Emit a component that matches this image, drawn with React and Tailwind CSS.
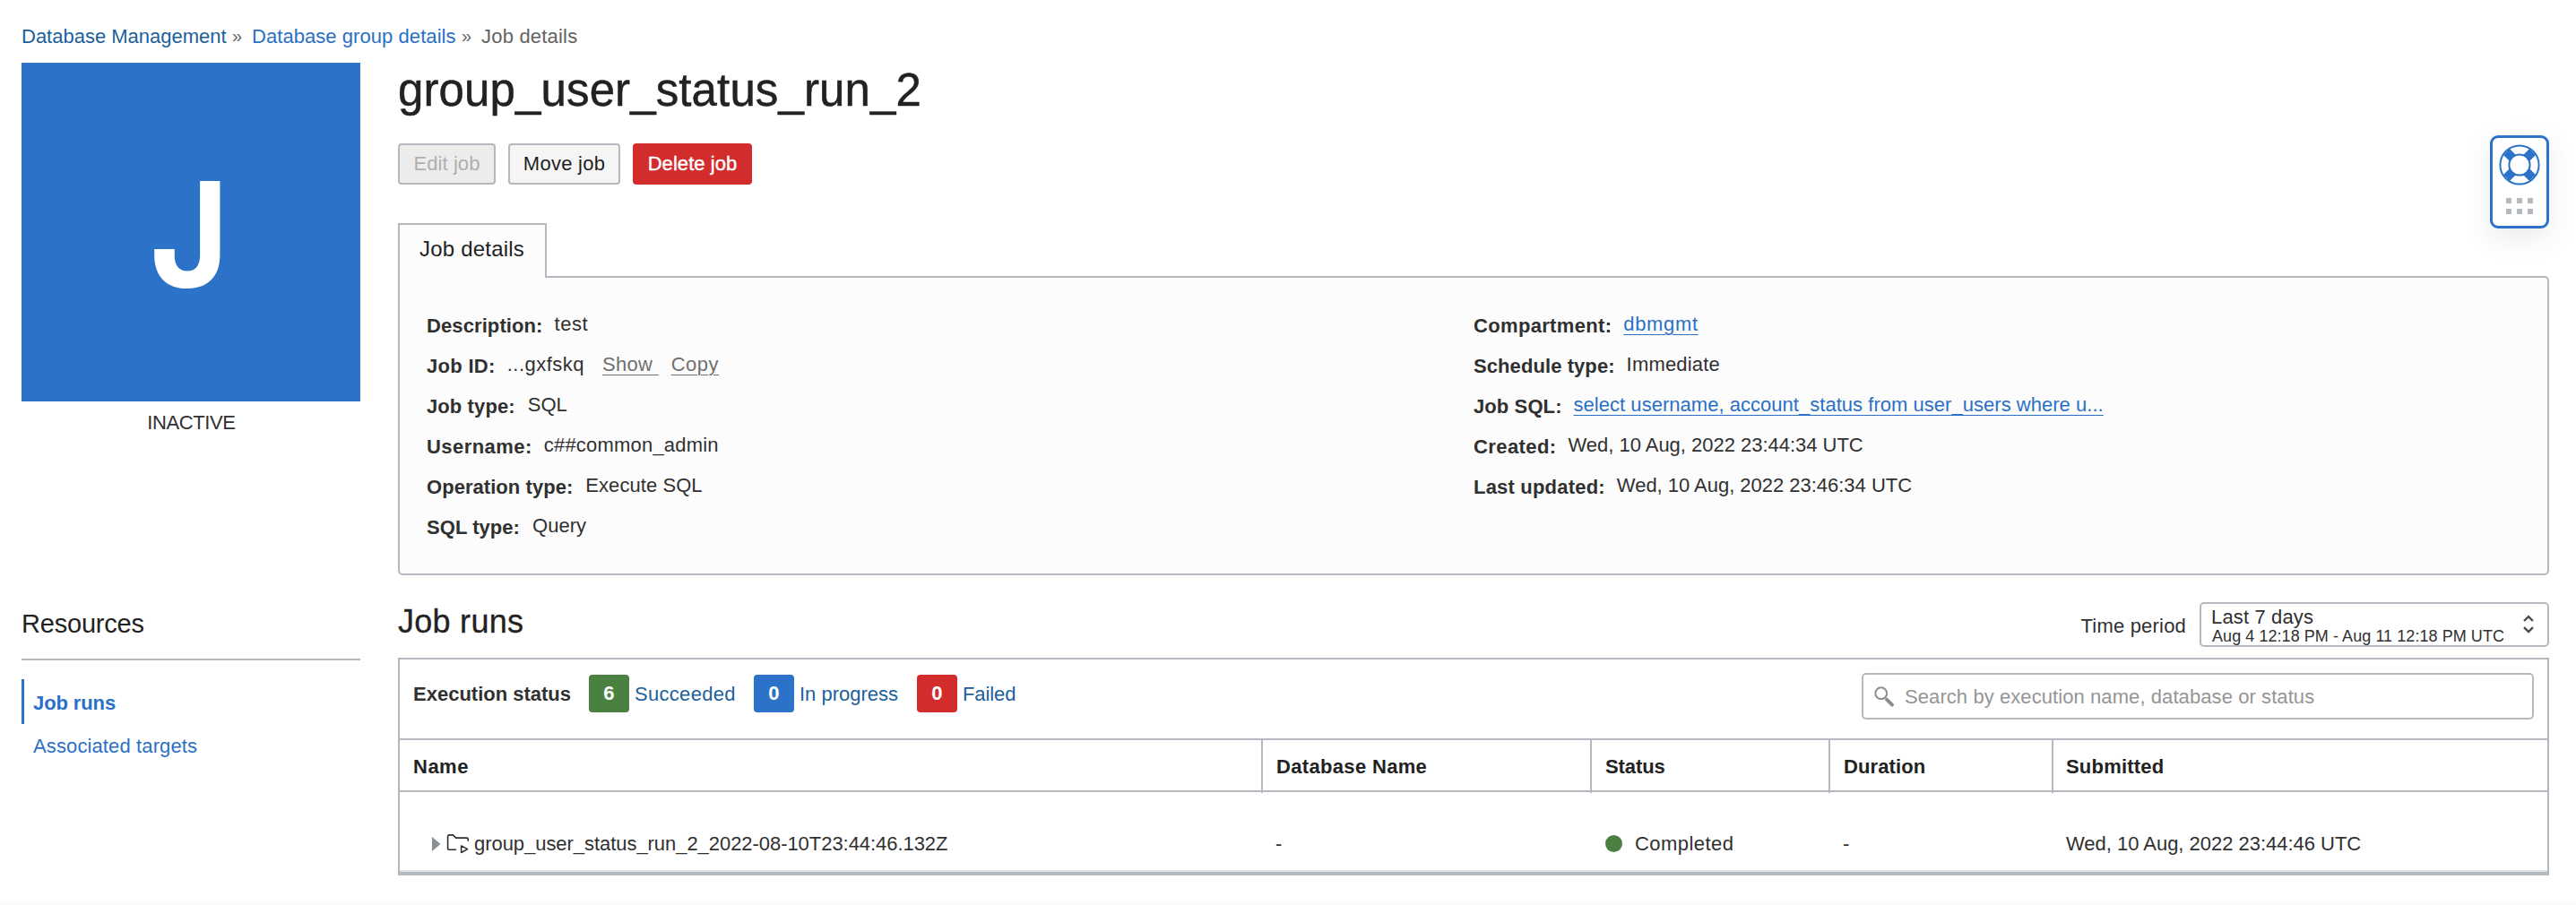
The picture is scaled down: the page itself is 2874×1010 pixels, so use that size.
import React from "react";

function Detail({ label, labelClass = "tracking-[0.1px]", gapClass = "gap-[13px]", children }) {
  return (
    <div className={`flex h-[45px] items-center ${gapClass}`}>
      <span className={`font-bold ${labelClass}`}>{label}</span>
      <span className="flex whitespace-pre pb-[4px]">{children}</span>
    </div>
  );
}

function StatusCount({ count, label, badgeClass, labelClass }) {
  return (
    <div className="flex items-center">
      <span className={`flex h-[42px] w-[45px] items-center justify-center rounded-[4px] font-bold text-white ${badgeClass}`}>
        {count}
      </span>
      <a className={`pl-[6px] pt-[1px] text-[#205f9b] ${labelClass}`}>{label}</a>
    </div>
  );
}

function LifeBuoyIcon() {
  return (
    <svg width="46" height="46" viewBox="-23 -23 46 46" className="block">
      <path d="M-14.5-14.5 14.5 14.5M14.5-14.5-14.5 14.5" stroke="#2b72c8" strokeWidth="9.8" />
      <circle r="21.6" fill="none" stroke="#2b72c8" strokeWidth="2" />
      <circle r="11.6" fill="#fff" stroke="#2b72c8" strokeWidth="2" />
    </svg>
  );
}

function RunFolderIcon() {
  return (
    <svg width="26" height="24" viewBox="0 0 26 24" fill="none" stroke="#2f2f2f" strokeWidth="1.6" strokeLinejoin="round" strokeLinecap="round">
      <path d="M10.5 18.3H2.4L1.6 17.5V3L2.6 1.9H7.3L10.6 5.1H23.2L24.2 6.1V8.2" />
      <path d="M16.6 13.9 23.6 17.7 16.6 21.5Z" strokeWidth="1.5" />
    </svg>
  );
}

const COLS = "grid grid-cols-[963px_367px_266px_249px_551px]";
const BORDER = "border-[#b3b9bf]";

export default function App() {
  return (
    <div
      className="relative flex h-[1010px] w-[2874px] flex-col overflow-hidden bg-white pl-[24px] pr-[30px] pt-[26px] text-[22px] leading-[30px] tracking-[0.06px] text-[#303030]"
      style={{ fontFamily: '"Liberation Sans", Arial, sans-serif' }}
    >
      <nav className="flex h-[44px] whitespace-pre text-[#636363]">
        <a className="w-[229px] text-[#205f9b] tracking-[0px]">Database Management</a>
        <span className="w-[28px] pl-[6px] text-[20px] leading-[29px]">»</span>
        <a className="w-[227px] text-[#2a70c6]">Database group details</a>
        <span className="w-[29px] pl-[7px] text-[20px] leading-[29px]">»</span>
        <span className="tracking-[0.2px]">Job details</span>
      </nav>

      <div className="flex gap-[42px]">
        <aside className="w-[378px] shrink-0">
          <div
            className="flex h-[378px] items-center justify-center bg-[#2b72c8] pr-[4px] pt-[4px] text-[162px] font-bold leading-[162px] text-white"
            style={{ fontFamily: 'Inter, "Liberation Sans", sans-serif' }}
          >
            <span className="scale-x-[0.93]">J</span>
          </div>
          <div className="mt-[9px] pl-[1px] text-center tracking-[-0.4px]">INACTIVE</div>
          <h2 className="mt-[189px] h-[40px] text-[29px] leading-[40px] tracking-[-0.2px] text-[#222]">Resources</h2>
          <div className="mt-[19px] h-[2px] bg-[#b3b9bf]" />
          <ul className="mt-[21px] text-[#2a70c6]">
            <li className="flex h-[50px] items-center border-l-[3px] border-[#2b72c8] pl-[10px] pt-[3px] font-bold tracking-[-0.1px]">Job runs</li>
            <li className="flex h-[50px] items-center pl-[13px] tracking-[0.12px]">Associated targets</li>
          </ul>
        </aside>

        <main className="w-[2400px]">
          <h1 className="h-[60px] pt-[1px] text-[51px] leading-[60px] tracking-[0.12px] text-[#222] [-webkit-text-stroke:0.5px_#222]">group_user_status_run_2</h1>

          <div className="mt-[30px] flex h-[46px] leading-[42px]">
            <button className={`w-[109px] rounded-[4px] border-2 ${BORDER} bg-[#ececec] text-[#afafaf]`}>Edit job</button>
            <button className={`ml-[14px] w-[125px] rounded-[4px] border-2 ${BORDER} bg-[#f5f5f5] tracking-[0.25px] text-[#1f1f1f]`}>Move job</button>
            <button className="ml-[14px] w-[133px] rounded-[4px] bg-[#d22c2c] text-white [-webkit-text-stroke:0.4px_white]">Delete job</button>
          </div>

          <div className={`relative z-10 mt-[43px] h-[61px] w-[166px] border-2 border-b-0 ${BORDER} bg-[#fcfcfc] pl-[22px] text-[24px] leading-[53px] tracking-[0.2px] text-[#222]`}>
            Job details
          </div>
          <section className={`-mt-[2px] grid h-[334px] grid-cols-[1168px_1fr] rounded-[5px] rounded-tl-none border-2 ${BORDER} bg-[#fcfcfc] pl-[30px] pt-[31px]`}>
            <div>
              <Detail label="Description:">
                <span className="tracking-[0.5px]">test</span>
              </Detail>
              <Detail label="Job ID:" labelClass="tracking-[0.3px]">
                <span className="tracking-[0.5px]">...gxfskq</span>
                <a className="ml-[20px] text-[#707070] tracking-[0.3px] underline decoration-1 underline-offset-[4px]">Show </a>
                <a className="ml-[14px] text-[#707070] tracking-[0.5px] underline decoration-1 underline-offset-[4px]">Copy</a>
              </Detail>
              <Detail label="Job type:" gapClass="gap-[14px]">SQL</Detail>
              <Detail label="Username:" labelClass="tracking-[0.45px]">
                <span className="tracking-[0.2px]">c##common_admin</span>
              </Detail>
              <Detail label="Operation type:" labelClass="tracking-[0.05px]" gapClass="gap-[14px]">Execute SQL</Detail>
              <Detail label="SQL type:" labelClass="tracking-[0.05px]" gapClass="gap-[14px]">Query</Detail>
            </div>
            <div>
              <Detail label="Compartment:" labelClass="tracking-[0.33px]">
                <a className="text-[#2a70c6] tracking-[0.65px] underline decoration-1 underline-offset-[4px]">dbmgmt</a>
              </Detail>
              <Detail label="Schedule type:" labelClass="tracking-[0.08px]">
                <span className="tracking-[0.19px]">Immediate</span>
              </Detail>
              <Detail label="Job SQL:">
                <a className="text-[#2a70c6] tracking-[0.03px] underline decoration-1 underline-offset-[4px]">select username, account_status from user_users where u...</a>
              </Detail>
              <Detail label="Created:" labelClass="tracking-[0.4px]">
                <span className="tracking-[-0.02px]">Wed, 10 Aug, 2022 23:44:34 UTC</span>
              </Detail>
              <Detail label="Last updated:" labelClass="tracking-[0.2px]">
                <span className="tracking-[-0.02px]">Wed, 10 Aug, 2022 23:46:34 UTC</span>
              </Detail>
            </div>
          </section>

          <div className="mt-[30px] flex h-[50px] items-start">
            <h2 className="text-[36px] leading-[44px] tracking-[0.27px] text-[#222] [-webkit-text-stroke:0.3px_#222]">Job runs</h2>
            <span className="ml-auto mr-[15px] leading-[53px] tracking-[0.19px]">Time period</span>
            <div className={`flex h-[50px] w-[390px] rounded-[5px] border-2 ${BORDER} bg-white pl-[11px] pr-[14px] pt-[2px]`}>
              <div className="whitespace-nowrap">
                <div className="leading-[25px] tracking-[0.15px]">Last 7 days</div>
                <div className="-mt-px ml-[1px] text-[18px] leading-[20px]">Aug 4 12:18 PM - Aug 11 12:18 PM UTC</div>
              </div>
              <svg width="14" height="22" viewBox="0 0 14 22" className="ml-auto mt-[9px]" fill="none" stroke="#4a4a4a" strokeWidth="2.4">
                <path d="M2 8 7 3.2 12 8M2 15.2 7 20 12 15.2" />
              </svg>
            </div>
          </div>

          <section className={`mt-[12px] border-2 border-b-4 ${BORDER}`}>
            <div className="flex h-[88px] items-start pl-[15px] pr-[15px]">
              <div className="flex items-center pt-[17px]">
                <span className="w-[196px] pt-[1px] font-bold tracking-[0px]">Execution status</span>
                <div className="flex">
                  <div className="w-[184px]">
                    <StatusCount count="6" label="Succeeded" badgeClass="bg-[#4a8141]" labelClass="tracking-[0.3px]" />
                  </div>
                  <div className="w-[182px]">
                    <StatusCount count="0" label="In progress" badgeClass="bg-[#2b72c8]" labelClass="tracking-[0px]" />
                  </div>
                  <StatusCount count="0" label="Failed" badgeClass="bg-[#d22c2c]" labelClass="tracking-[-0.1px]" />
                </div>
              </div>
              <div className={`ml-auto mt-[15px] flex h-[52px] w-[750px] items-center rounded-[5px] border-2 ${BORDER} pl-[11px]`}>
                <svg width="26" height="26" viewBox="0 0 26 26" fill="none" stroke="#8c8f92">
                  <circle cx="8.7" cy="9.7" r="6.4" strokeWidth="2" />
                  <path d="M15 16.6 21 22.6" strokeWidth="4" strokeLinecap="round" />
                </svg>
                <span className="ml-[9px] pt-[1px] tracking-[0.08px] text-[#959595]">Search by execution name, database or status</span>
              </div>
            </div>

            <div className={`${COLS} h-[60px] border-y-2 ${BORDER} font-bold leading-[59px] text-[#222]`}>
              <div className={`border-r-2 ${BORDER} pl-[15px] tracking-[0.5px]`}>Name</div>
              <div className={`border-r-2 ${BORDER} pl-[15px] tracking-[0.33px]`}>Database Name</div>
              <div className={`border-r-2 ${BORDER} pl-[15px] tracking-[-0.1px]`}>Status</div>
              <div className={`border-r-2 ${BORDER} pl-[15px] tracking-[0.1px]`}>Duration</div>
              <div className="pl-[14px] tracking-[0.2px]">Submitted</div>
            </div>

            <div className={`${COLS} h-[89px] border-b-2 border-[#dfe3e3] pt-[43px]`}>
              <div className="flex h-[30px] items-center pl-[36px]">
                <svg width="10" height="16" viewBox="0 0 10 16" fill="#8b9095">
                  <path d="M0 0 9.5 8 0 16Z" />
                </svg>
                <span className="ml-[6px]">
                  <RunFolderIcon />
                </span>
                <span className="ml-[5px] tracking-[-0.05px]">group_user_status_run_2_2022-08-10T23:44:46.132Z</span>
              </div>
              <div className="pl-[14px]">-</div>
              <div className="flex h-[30px] items-center pl-[15px]">
                <span className="-mt-[2px] size-[19px] rounded-full bg-[#4a8141]" />
                <span className="ml-[14px] tracking-[0.45px]">Completed</span>
              </div>
              <div className="pl-[14px]">-</div>
              <div className="pl-[14px] tracking-[-0.02px]">Wed, 10 Aug, 2022 23:44:46 UTC</div>
            </div>
          </section>
        </main>
      </div>

      <div className="-ml-[24px] -mr-[30px] mt-auto h-[3px] shrink-0 bg-[#fafafa]" />

      <div className="absolute right-[30px] top-[151px] flex h-[104px] w-[66px] flex-col items-center rounded-[9px] border-[3px] border-[#2b72c8] bg-white pt-[6.5px] shadow-[0_10px_30px_rgba(40,60,60,0.1)]">
        <LifeBuoyIcon />
        <div className="mt-[14.5px] grid grid-cols-3 gap-[6px]">
          {[0, 1, 2, 3, 4, 5].map((dot) => (
            <span key={dot} className="size-[6px] bg-[#b3b9bf]" />
          ))}
        </div>
      </div>
    </div>
  );
}
